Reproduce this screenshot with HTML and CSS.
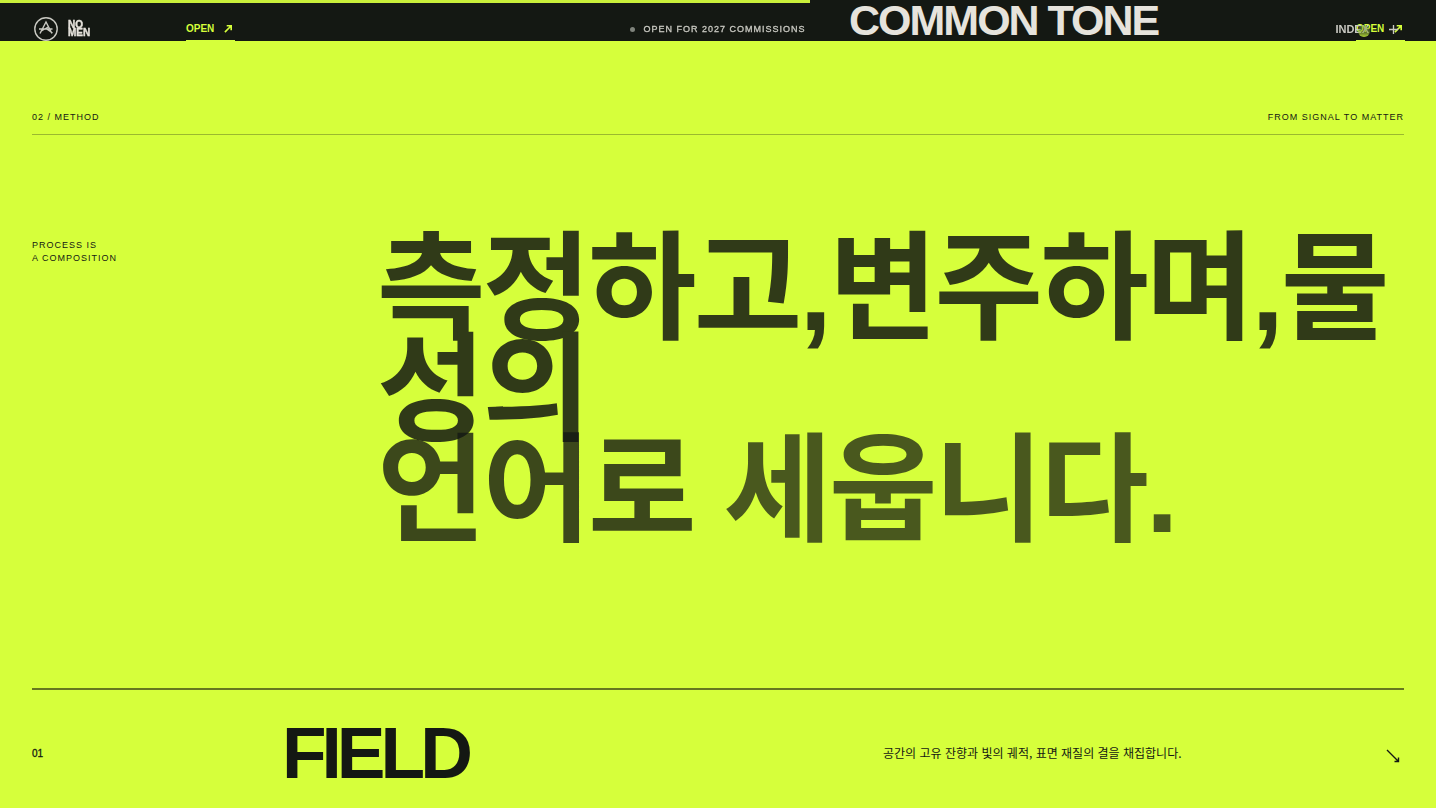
FILE: index.html
```
<!DOCTYPE html>
<html lang="ko">
<head>
    <meta charset="UTF-8">
    <meta name="viewport" content="width=device-width, initial-scale=1.0">
    <title>NO MEN</title>
    <link rel="stylesheet" href="styles.css">
</head>
<body>
    <!-- Fixed header -->
    <div class="progress"></div>
    <header class="site-header">
        <a class="brand" href="#">
            <svg class="brand-mark" viewBox="0 0 24 24" aria-hidden="true">
                <circle cx="12" cy="12" r="11.2"/>
                <path d="M6 16.5 L12 5 L18 16.5 M5 12 H18.5 M6.5 14.5 L15 9.5 M12 11.5 L18.5 16"/>
            </svg>
            <span class="brand-name">NO<br>MEN</span>
        </a>
        <p class="status"><span class="status-dot"></span>OPEN FOR 2027 COMMISSIONS</p>
        <button class="index-button" type="button">
            INDEX
            <svg viewBox="0 0 10 10" aria-hidden="true"><path d="M0 5 H10 M5 0 V10"/></svg>
        </button>
    </header>
    <div class="cursor"></div>

    <!-- Works, last row -->
    <section class="works">
        <a class="open-link" href="#">OPEN
            <svg viewBox="0 0 10 10" aria-hidden="true"><path d="M1 9 L8 2 M3 2 H8 V7"/></svg>
        </a>
        <h3 class="work-title">COMMON TONE</h3>
        <a class="open-link" href="#">OPEN
            <svg viewBox="0 0 10 10" aria-hidden="true"><path d="M1 9 L8 2 M3 2 H8 V7"/></svg>
        </a>
    </section>

    <!-- Method -->
    <section class="method">
        <div class="section-head">
            <span>02 / METHOD</span>
            <span>FROM SIGNAL TO MATTER</span>
        </div>
        <div class="method-intro">
            <p class="method-label">PROCESS IS<br>A COMPOSITION</p>
            <h2 class="method-title">
                <span class="word">측정하고,변주하며,물성의</span>
                <span class="line"><span class="word word-mid">언어로</span> <span class="word word-low">세웁니다.</span></span>
            </h2>
        </div>
        <article class="step">
            <span class="step-number">01</span>
            <h3 class="step-title">FIELD</h3>
            <p class="step-text">공간의 고유 잔향과 빛의 궤적, 표면 재질의 결을 채집합니다.</p>
            <svg class="step-arrow" viewBox="0 0 14 14" aria-hidden="true"><path d="M1 1 L12.5 12.5 M12.5 8.5 V12.5 H8.5"/></svg>
        </article>
    </section>
</body>
</html>
```
FILE: styles.css
```
:root {
    --ink: #141813;
    --acid: #d6ff3b;
    --paper: #e6e3dc;
    --gutter: 32px;
}

* {
    box-sizing: border-box;
}

body {
    margin: 0;
    background: var(--acid);
    color: var(--ink);
    font-family: "Liberation Sans", "Noto Sans CJK KR", sans-serif;
    overflow-x: hidden;
}

h2, h3, p {
    margin: 0;
}

a {
    color: inherit;
    text-decoration: none;
}

/* Header */
.progress {
    position: fixed;
    top: 0;
    left: 0;
    width: 56.4%;
    height: 3px;
    background: #c9ee3a;
    z-index: 30;
}

.site-header {
    position: fixed;
    top: 0;
    left: 0;
    right: 0;
    display: grid;
    grid-template-columns: 1fr auto 1fr;
    align-items: center;
    padding: 17px var(--gutter) 0;
    color: #c9c9c2;
    z-index: 10;
}

.brand {
    display: flex;
    align-items: center;
    gap: 10px;
    padding-left: 2px;
}

.brand-mark {
    width: 24px;
    height: 24px;
    fill: none;
    stroke: currentColor;
    stroke-width: 1.4;
}

.brand-name {
    color: var(--paper);
    font-size: 10px;
    font-weight: 900;
    line-height: 8px;
    -webkit-text-stroke: 0.4px currentColor;
}

.status {
    display: flex;
    align-items: center;
    gap: 8px;
    font-size: 9px;
    letter-spacing: 1px;
    -webkit-text-stroke: 0.3px currentColor;
}

.status-dot {
    width: 5px;
    height: 5px;
    border-radius: 50%;
    background: #7f837c;
}

.index-button {
    display: flex;
    align-items: center;
    justify-self: end;
    gap: 20px;
    padding: 0 6px 0 0;
    border: 0;
    background: none;
    color: inherit;
    font: bold 11px "Liberation Sans", sans-serif;
}

.index-button svg {
    width: 9px;
    height: 9px;
    stroke: currentColor;
    stroke-width: 1.5;
}

.cursor {
    position: fixed;
    top: 25px;
    left: 95%;
    width: 12px;
    height: 12px;
    margin-left: -6px;
    border-radius: 50%;
    background: linear-gradient(rgba(120, 150, 60, 0.5) 50%, rgba(190, 232, 56, 0.9));
    z-index: 20;
}

/* Works */
.works {
    display: grid;
    grid-template-columns: 154px 663fr 507fr 48px;
    padding: 0 var(--gutter);
    background: var(--ink);
    color: var(--acid);
}

.open-link {
    grid-column: 2;
    grid-row: 1;
    display: flex;
    justify-content: space-between;
    align-items: center;
    width: 49px;
    padding: 17px 0 0;
    border-bottom: 1px solid var(--acid);
    font-size: 10px;
    font-weight: bold;
}

.open-link:last-child {
    grid-column: 4;
}

.open-link svg {
    width: 9px;
    height: 9px;
    margin-right: 2px;
    fill: none;
    stroke: currentColor;
    stroke-width: 1.8;
}

.work-title {
    grid-column: 3;
    grid-row: 1;
    color: var(--paper);
    font-size: 43px;
    line-height: 41px;
    letter-spacing: -2px;
    white-space: nowrap;
}

/* Method */
.method {
    padding: 70px var(--gutter) 0;
}

.section-head {
    display: flex;
    justify-content: space-between;
    padding-bottom: 11px;
    border-bottom: 1px solid rgba(20, 24, 19, 0.3);
    font-size: 9px;
    line-height: 12px;
    letter-spacing: 1px;
}

.method-intro {
    display: grid;
    grid-template-columns: 1fr 3fr;
    padding: 104px 0 146px;
}

.method-label {
    font-size: 9px;
    line-height: 13px;
    letter-spacing: 1px;
}

.method-title {
    padding-left: 2px;
    font-size: 118px;
    line-height: 101px;
    letter-spacing: -3px;
}

.line {
    display: block;
}

.word {
    opacity: 0.85;
}

.word-mid {
    opacity: 0.79;
}

.word-low {
    opacity: 0.72;
}

/* Steps */
.step {
    display: grid;
    grid-template-columns: 250fr 601fr 503fr 18px;
    align-items: center;
    height: 128px;
    border-top: 2px solid #66771f;
}

.step-number {
    font-size: 10px;
    -webkit-text-stroke: 0.3px currentColor;
}

.step-title {
    font-size: 73px;
    line-height: 74px;
    letter-spacing: -5px;
}

.step-text {
    font-family: "Noto Sans CJK KR", sans-serif;
    font-size: 12px;
    line-height: 20px;
}

.step-arrow {
    width: 14px;
    height: 14px;
    margin-top: 6px;
    fill: none;
    stroke: currentColor;
    stroke-width: 1.4;
}
```
